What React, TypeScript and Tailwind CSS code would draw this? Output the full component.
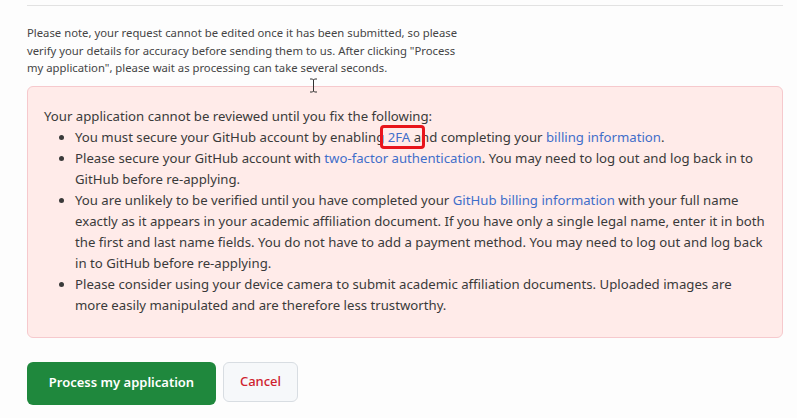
import React from 'react';

const font = { fontFamily: '"Noto Sans", "Open Sans", sans-serif' };

function Link({ children }: { children: React.ReactNode }) {
  return <a className="text-[#3f6ec9] no-underline">{children}</a>;
}

export default function App() {
  return (
    <div className="relative w-[797px] h-[418px] overflow-hidden bg-[#fdfdfd] text-[#3a3a3a]" style={font}>
      <div className="ml-[27px] mr-[14px] mt-[5px] border-t border-[#e2e2e2]" />

      <p className="ml-[27px] mt-[18px] w-[440px] text-[11.3px] leading-[17.5px] text-[#454545]">
        Please note, your request cannot be edited once it has been submitted, so please verify your details for
        accuracy before sending them to us. After clicking "Process my application", please wait as processing can
        take several seconds.
      </p>

      {/* text cursor */}
      <svg className="absolute left-[309px] top-[78px]" width="9" height="15" viewBox="0 0 9 15">
        <path d="M1 1h2.5L4.5 2 5.5 1H8M4.5 2v11M1 14h2.5l1-1 1 1H8" fill="none" stroke="#333" strokeWidth="1" />
      </svg>

      <div className="ml-[27px] mr-[14px] mt-[9px] rounded-md border border-[#f6c9cd] bg-[#ffebe9] px-4 pt-[19px] pb-[21px] text-[13.2px] leading-[21px]">
        <p>Your application cannot be reviewed until you fix the following:</p>
        <ul className="list-disc pl-[31px]">
          <li>
            You must secure your GitHub account by enabling{' '}
            <span className="relative">
              <Link>2FA</Link>
              <span className="absolute -left-[8px] -right-[15px] -top-[3px] -bottom-[3px] rounded-[4px] border-[3px] border-[#e8141b]" />
            </span>{' '}
            and completing your <Link>billing information</Link>.
          </li>
          <li>
            Please secure your GitHub account with <Link>two-factor authentication</Link>. You may need to log out and
            log back in to GitHub before re-applying.
          </li>
          <li>
            You are unlikely to be verified until you have completed your <Link>GitHub billing information</Link> with
            your full name exactly as it appears in your academic affiliation document. If you have only a single legal
            name, enter it in both the first and last name fields. You do not have to add a payment method. You may
            need to log out and log back in to GitHub before re-applying.
          </li>
          <li>
            Please consider using your device camera to submit academic affiliation documents. Uploaded images are
            more easily manipulated and are therefore less trustworthy.
          </li>
        </ul>
      </div>

      <div className="ml-[27px] mt-[24px] flex items-start gap-[7px]">
        <button className="h-[43px] w-[189px] rounded-md bg-[#1f883d] text-[13px] font-semibold text-white">
          Process my application
        </button>
        <button className="h-[40px] w-[75px] rounded-md border border-[#d8dde2] bg-[#f6f8fa] text-[13px] font-medium text-[#cf222e]">
          Cancel
        </button>
      </div>
    </div>
  );
}
